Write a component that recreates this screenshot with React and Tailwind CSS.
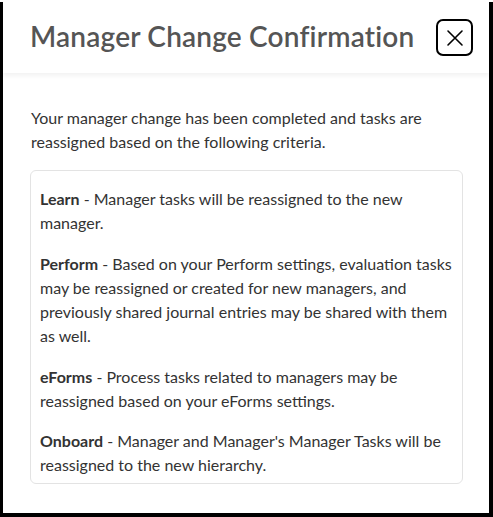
export default function App() {
  return (
    <div className="w-[493px] h-[517px] bg-black" style={{ fontFamily: "Lato, 'Noto Sans', sans-serif" }}>
      <div className="ml-[3px] mt-[2px] w-[486px] h-[511px] bg-white flex flex-col">
        <div className="h-[71px] flex items-start justify-between pl-[27px] pr-[16px] pt-[16px] shadow-[0_3px_4px_rgba(0,0,0,0.05)] relative">
          <h1 className="text-[28px] font-semibold text-[#555555] leading-[36px] tracking-[0.2px]">Manager Change Confirmation</h1>
          <button className="w-[37px] h-[37px] mt-[1px] border-2 border-black rounded-[7px] flex items-center justify-center">
            <svg width="20" height="20" viewBox="0 0 20 20" fill="none" stroke="black" strokeWidth="1.6" strokeLinecap="round">
              <path d="M3 3 L17 17 M17 3 L3 17" />
            </svg>
          </button>
        </div>
        <div className="px-[27px] pt-[33px] text-[16px] leading-[24px] text-[#333333]">
          <p className="pl-[1px]">Your manager change has been completed and tasks are reassigned based on the following criteria.</p>
          <div className="mt-[16px] w-[433px] border border-[#e3e3e3] rounded-[6px] pl-[9px] pr-[8px] pt-[16px] pb-[6px] flex flex-col gap-[17px]">
            <p><b className="font-bold">Learn</b> - Manager tasks will be reassigned to the new manager.</p>
            <p><b className="font-bold">Perform</b> - Based on your Perform settings, evaluation tasks may be reassigned or created for new managers, and previously shared journal entries may be shared with them as well.</p>
            <p><b className="font-bold">eForms</b> - Process tasks related to managers may be reassigned based on your eForms settings.</p>
            <p className="-mt-[1px]"><b className="font-bold">Onboard</b> - Manager and Manager's Manager Tasks will be reassigned to the new hierarchy.</p>
          </div>
        </div>
      </div>
    </div>
  );
}
